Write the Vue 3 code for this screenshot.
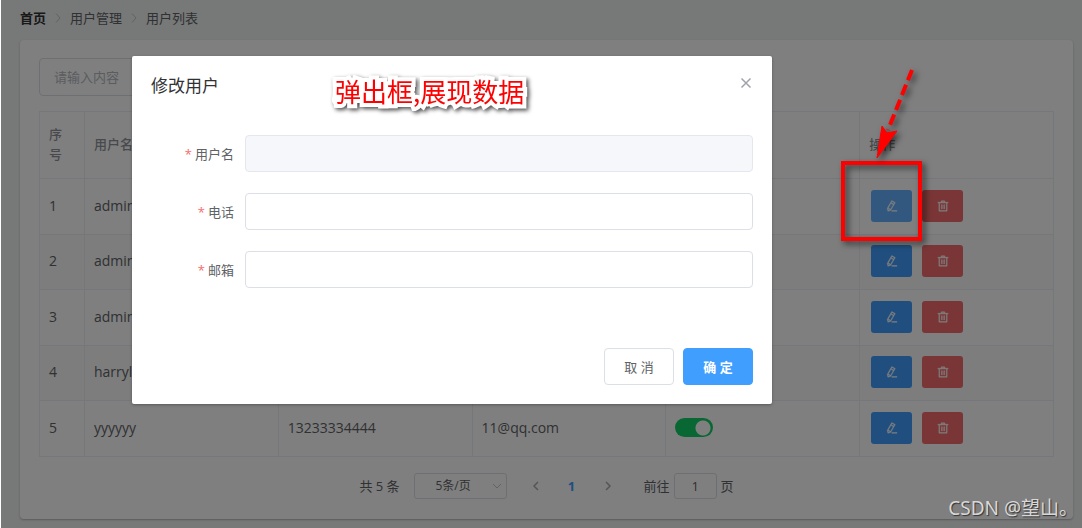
<script setup>
import { ref } from 'vue'

const query = ref('')
const pageSize = ref('5')
const jumpPage = ref('1')
const form = ref({ username: '', mobile: '', email: '' })

const users = ref([
  { id: 1, name: 'admin', focused: true },
  { id: 2, name: 'admin' },
  { id: 3, name: 'admin' },
  { id: 4, name: 'harryly' },
  { id: 5, name: 'yyyyyy', mobile: '13233334444', email: '11@qq.com', enabled: true },
])
</script>

<template>
  <div class="page">
    <nav class="breadcrumb">
      <a class="home" href="#">首页</a>
      <svg class="sep" viewBox="0 0 8 12"><path d="M2 1.500l4 4.500-4 4.500" /></svg>
      <span>用户管理</span>
      <svg class="sep" viewBox="0 0 8 12"><path d="M2 1.500l4 4.500-4 4.500" /></svg>
      <span>用户列表</span>
    </nav>

    <main class="card">
      <input v-model="query" class="search" type="text" placeholder="请输入内容" aria-label="请输入内容" />

      <table class="users">
        <colgroup>
          <col class="col-index" />
          <col /><col /><col /><col /><col />
        </colgroup>
        <thead>
          <tr>
            <th>序号</th>
            <th>用户名</th>
            <th></th>
            <th></th>
            <th></th>
            <th>操作</th>
          </tr>
        </thead>
        <tbody>
          <tr v-for="user in users" :key="user.id">
            <td>{{ user.id }}</td>
            <td>{{ user.name }}</td>
            <td>{{ user.mobile }}</td>
            <td>{{ user.email }}</td>
            <td>
              <input
                v-if="user.enabled"
                v-model="user.enabled"
                class="switch"
                type="checkbox"
                role="switch"
                :aria-label="user.name"
              />
            </td>
            <td>
              <div class="actions">
                <button class="action edit" :class="{ focused: user.focused }" type="button" aria-label="修改">
                  <svg viewBox="0 0 1024 1024"><path d="m199.040 672.640 193.984 112 224-387.968-193.920-112-224 388.032zm-23.872 60.160 32.896 148.288 144.896-45.696L175.168 732.800zM455.040 229.248l193.920 112 56.704-98.112-193.984-112-56.640 98.112zM104.320 708.800l384-665.024 304.768 175.936L409.152 884.800h.064l-248.448 78.336L104.320 708.800zm384 254.272v-64h448v64h-448z" /></svg>
                </button>
                <button class="action delete" type="button" aria-label="删除">
                  <svg viewBox="0 0 1024 1024"><path d="M160 256H96a32 32 0 0 1 0-64h256V95.936a32 32 0 0 1 32-32h256a32 32 0 0 1 32 32V192h256a32 32 0 1 1 0 64h-64v672a32 32 0 0 1-32 32H192a32 32 0 0 1-32-32V256zm448-64v-64H416v64h192zM224 896h576V256H224v640zm192-128a32 32 0 0 1-32-32V416a32 32 0 0 1 64 0v320a32 32 0 0 1-32 32zm192 0a32 32 0 0 1-32-32V416a32 32 0 0 1 64 0v320a32 32 0 0 1-32 32z" /></svg>
                </button>
              </div>
            </td>
          </tr>
        </tbody>
      </table>

      <div class="pagination">
        <span>共 5 条</span>
        <div class="size">
          <select v-model="pageSize" aria-label="条/页">
            <option value="5">5条/页</option>
          </select>
          <svg class="chevron" viewBox="0 0 12 8"><path d="M2 2l4 4 4-4" /></svg>
        </div>
        <div class="pager">
          <button type="button" aria-label="上一页">
            <svg class="arrow" viewBox="0 0 8 12"><path d="M6 2L2 6l4 4" /></svg>
          </button>
          <button class="current" type="button">1</button>
          <button type="button" aria-label="下一页">
            <svg class="arrow" viewBox="0 0 8 12"><path d="M2 2l4 4-4 4" /></svg>
          </button>
        </div>
        <label class="jump">前往<input v-model="jumpPage" type="text" />页</label>
      </div>
    </main>

    <div class="overlay">
      <section class="dialog" role="dialog" aria-labelledby="dialog-title">
        <header class="dialog-header">
          <h2 id="dialog-title">修改用户</h2>
          <button class="close" type="button" aria-label="关闭">
            <svg viewBox="0 0 12 12"><path d="M1.500 1.500l9 9M10.500 1.500l-9 9" /></svg>
          </button>
        </header>
        <form class="form" @submit.prevent>
          <label for="username">用户名</label>
          <input id="username" v-model="form.username" type="text" disabled />
          <label for="mobile">电话</label>
          <input id="mobile" v-model="form.mobile" type="text" />
          <label for="email">邮箱</label>
          <input id="email" v-model="form.email" type="text" />
        </form>
        <footer class="dialog-footer">
          <button class="cancel" type="button">取 消</button>
          <button class="confirm" type="button">确 定</button>
        </footer>
      </section>
    </div>

    <div class="note">弹出框,展现数据</div>
    <div class="highlight"></div>
    <svg class="pointer" viewBox="0 0 60 110">
      <path class="shaft" d="M42 10L18 70" />
      <path class="head" d="M7 98L12 66L17 73L27 71Z" />
    </svg>
    <div class="watermark">CSDN @望山。</div>
  </div>
</template>

<style>
body {
  margin: 0;
  background: #fff;
}
</style>

<style scoped>
.page {
  position: relative;
  box-sizing: border-box;
  min-height: 100vh;
  margin-left: 1px;
  padding: 8px 9px 8px 19px;
  background: #eff0f0;
  color: #606266;
  font-family: "Open Sans", "Noto Sans CJK SC", sans-serif;
  font-size: 13px;
  line-height: 20px;
}

button,
input,
select {
  box-sizing: border-box;
  margin: 0;
  font: inherit;
  color: inherit;
}

button {
  padding: 0;
  border: 0;
  background: none;
}

svg path {
  fill: none;
  stroke: currentColor;
}

.breadcrumb {
  display: flex;
  align-items: center;
  height: 20px;
  margin-bottom: 12px;
}

.home {
  color: #303133;
  font-weight: 700;
  text-decoration: none;
}

.sep {
  width: 8px;
  height: 12px;
  margin: 0 8px;
  color: #c0c4cc;
}

.card {
  padding: 18px 19px 20px;
  border-radius: 4px;
  background: #fff;
  box-shadow: 0 1px 2px rgba(0, 0, 0, 0.25);
}

.search {
  display: block;
  width: 280px;
  height: 38px;
  padding: 0 14px;
  border: 1px solid #dcdfe6;
  border-radius: 4px;
  background: #fff;
}

.search::placeholder {
  color: #b4b8c0;
  opacity: 1;
}

.users {
  width: 100%;
  margin-top: 15px;
  border: 1px solid #ebeef5;
  border-width: 1px 0 0 1px;
  border-spacing: 0;
  table-layout: fixed;
}

.col-index {
  width: 45px;
}

.users th,
.users td {
  box-sizing: border-box;
  height: 56px;
  padding: 0 9px 2px;
  border: 1px solid #ebeef5;
  border-width: 0 1px 1px 0;
  font-size: 14px;
  text-align: left;
}

.users th {
  height: 67px;
  padding-right: 18px;
  color: #909399;
  font-size: 13px;
  font-weight: 500;
}

.users tr:nth-child(even) td {
  height: 55px;
  background: #fafafa;
}

.switch {
  display: block;
  width: 38px;
  height: 19px;
  border-radius: 10px;
  appearance: none;
  background: radial-gradient(circle at 28px 10px, #fff 7px, transparent 8px) #13ce66;
}

.actions {
  display: flex;
  gap: 10px;
  padding-left: 2px;
}

.action {
  display: grid;
  place-items: center;
  width: 41px;
  height: 32px;
  border-radius: 3px;
  color: #fff;
}

.action svg {
  width: 12px;
  height: 12px;
}

.action path {
  fill: currentColor;
  stroke-width: 36;
}

.edit {
  background: #409eff;
}

.edit.focused {
  background: #66b1ff;
}

.delete {
  background: #f56c6c;
}

.pagination {
  display: flex;
  align-items: center;
  justify-content: center;
  height: 26px;
  margin-top: 16px;
}

.size {
  display: grid;
  align-items: center;
  margin: 0 11px 0 14px;
  font-size: 12px;
}

.size select,
.size .chevron {
  grid-area: 1 / 1;
}

.size select {
  width: 93px;
  height: 26px;
  padding: 0 14px 0 0;
  border: 1px solid #dcdfe6;
  border-radius: 3px;
  appearance: none;
  background: #fff;
  text-align: center;
  text-align-last: center;
}

.chevron {
  justify-self: end;
  width: 12px;
  height: 8px;
  margin-right: 4px;
  color: #c0c4cc;
  pointer-events: none;
}

.pager {
  display: flex;
}

.pager button {
  display: grid;
  place-items: center;
  width: 36px;
  height: 26px;
  color: #a8abb2;
}

.arrow {
  width: 8px;
  height: 12px;
}

.arrow path {
  stroke-width: 1.500;
}

.pager .current {
  color: #409eff;
  font-weight: 700;
}

.jump {
  display: flex;
  align-items: center;
  gap: 4px;
  margin-left: 18px;
}

.jump input {
  width: 43px;
  height: 26px;
  padding: 0;
  border: 1px solid #dcdfe6;
  border-radius: 3px;
  background: #fff;
  text-align: center;
}

.overlay {
  position: absolute;
  inset: 0;
  padding: 56px 310px 0 131px;
  background: rgba(0, 0, 0, 0.5);
}

.dialog {
  padding: 19px;
  border-radius: 2px;
  background: #fff;
  box-shadow: 0 1px 3px rgba(0, 0, 0, 0.3);
}

.dialog-header {
  display: flex;
  align-items: flex-start;
  justify-content: space-between;
  height: 22px;
}

.dialog-header h2 {
  margin: 0;
  color: #303133;
  font-size: 17px;
  font-weight: 400;
  line-height: 22px;
}

.close {
  display: grid;
  place-items: center;
  width: 15px;
  height: 16px;
  color: #a0a3a9;
}

.close svg {
  width: 12px;
  height: 12px;
}

.close path {
  stroke-width: 1.500;
}

.form {
  display: grid;
  grid-template-columns: 83px 1fr;
  gap: 21px 11px;
  align-items: center;
  margin-top: 38px;
}

.form label {
  text-align: right;
}

.form label::before {
  content: "*";
  margin-right: 3px;
  color: #f56c6c;
}

.form input {
  width: 100%;
  height: 37px;
  padding: 0 14px;
  border: 1px solid #dcdfe6;
  border-radius: 4px;
  background: #fff;
}

.form input:disabled {
  border-color: #e4e7ed;
  background: #f5f7fa;
}

.dialog-footer {
  display: flex;
  justify-content: flex-end;
  gap: 9px;
  margin-top: 60px;
}

.dialog-footer button {
  width: 70px;
  height: 37px;
  border: 1px solid #dcdfe6;
  border-radius: 4px;
}

.dialog-footer .confirm {
  border-color: #409eff;
  background: #409eff;
  color: #fff;
  font-weight: 700;
}

.note {
  position: absolute;
  top: 75px;
  left: 334px;
  color: #f00;
  font-family: "Noto Sans CJK SC", sans-serif;
  font-size: 26px;
  line-height: 32px;
  white-space: nowrap;
  paint-order: stroke fill;
  -webkit-text-stroke: 8px #fff;
  stroke-linejoin: round;
  filter: drop-shadow(2px 2px 2px rgba(0, 0, 0, 0.7));
}

.highlight {
  position: absolute;
  top: 161px;
  left: 840px;
  box-sizing: border-box;
  width: 81px;
  height: 80px;
  border: 4px solid #f00;
  filter: drop-shadow(3px 3px 3px rgba(0, 0, 0, 0.6));
}

.pointer {
  position: absolute;
  top: 60px;
  left: 869px;
  width: 60px;
  height: 110px;
  filter: drop-shadow(3px 3px 3px rgba(0, 0, 0, 0.6));
}

.pointer .shaft {
  stroke: #f00;
  stroke-width: 4;
  stroke-dasharray: 11 5;
}

.pointer .head {
  fill: #f00;
  stroke: #f00;
}

.watermark {
  position: absolute;
  right: 4px;
  bottom: 8px;
  color: #d8d8d8;
  font-family: "Noto Sans", "Noto Sans CJK SC", sans-serif;
  font-size: 19px;
  line-height: 24px;
  text-shadow: 1px 1px 1px rgba(0, 0, 0, 0.6);
}
</style>
